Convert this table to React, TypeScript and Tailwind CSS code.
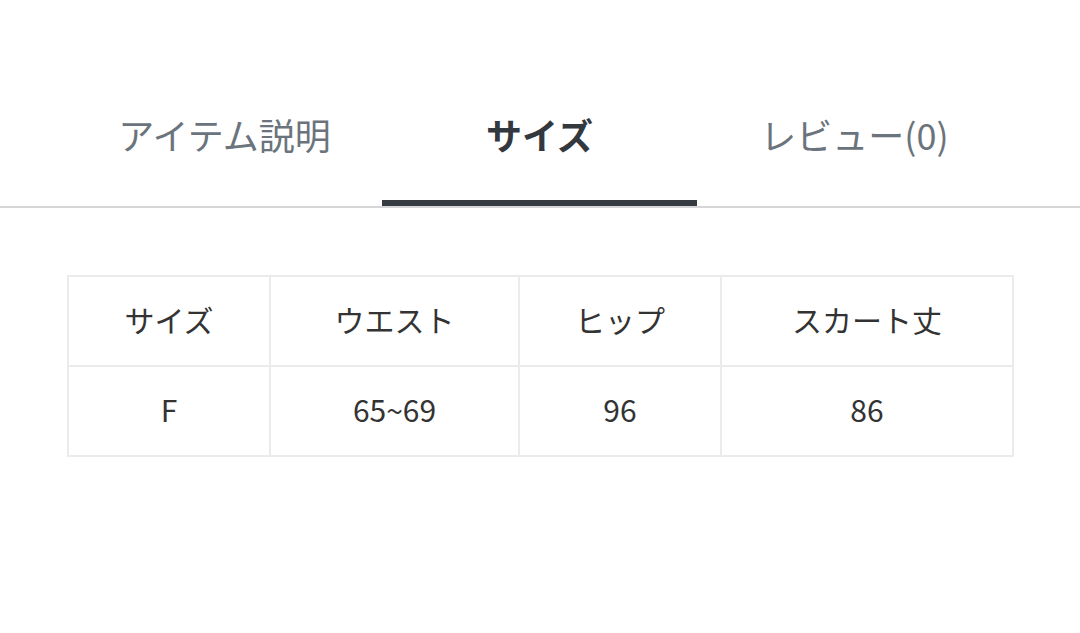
const tabs = ["アイテム説明", "サイズ", "レビュー(0)"];
const head = ["サイズ", "ウエスト", "ヒップ", "スカート丈"];
const row = ["F", "65~69", "96", "86"];
const widths = ["w-[202px]", "w-[249px]", "w-[202px]", "w-[292px]"];

export default function App() {
  return (
    <div
      className="w-[1080px] h-[633px] bg-white overflow-hidden"
      style={{ fontFamily: '"Noto Sans CJK JP", "Noto Sans", sans-serif' }}
    >
      <div className="pt-[109px] border-b-2 border-[#d6d6d8]">
        <div className="mx-[67px] flex">
          {tabs.map((t, i) => (
            <div key={t} className="w-[315px] flex flex-col items-center">
              <span
                className={
                  "text-[36px] leading-[51px] " +
                  (i === 1 ? "font-bold text-[#33383f]" : "text-[#6b747c]")
                }
              >
                {t}
              </span>
              <div className={"mt-[40px] h-[6px] w-full " + (i === 1 ? "bg-[#363b42]" : "")} />
            </div>
          ))}
        </div>
      </div>

      <table className="mt-[67px] ml-[67px] border-collapse table-fixed w-[945px] text-[#333] text-[30px]">
        <tbody>
          {[head, row].map((r, ri) => (
            <tr key={ri} className="h-[90px]">
              {r.map((c, ci) => (
                <td key={ci} className={"border-2 border-[#ebebed] text-center pb-[4px] " + widths[ci]}>
                  {c}
                </td>
              ))}
            </tr>
          ))}
        </tbody>
      </table>
    </div>
  );
}
